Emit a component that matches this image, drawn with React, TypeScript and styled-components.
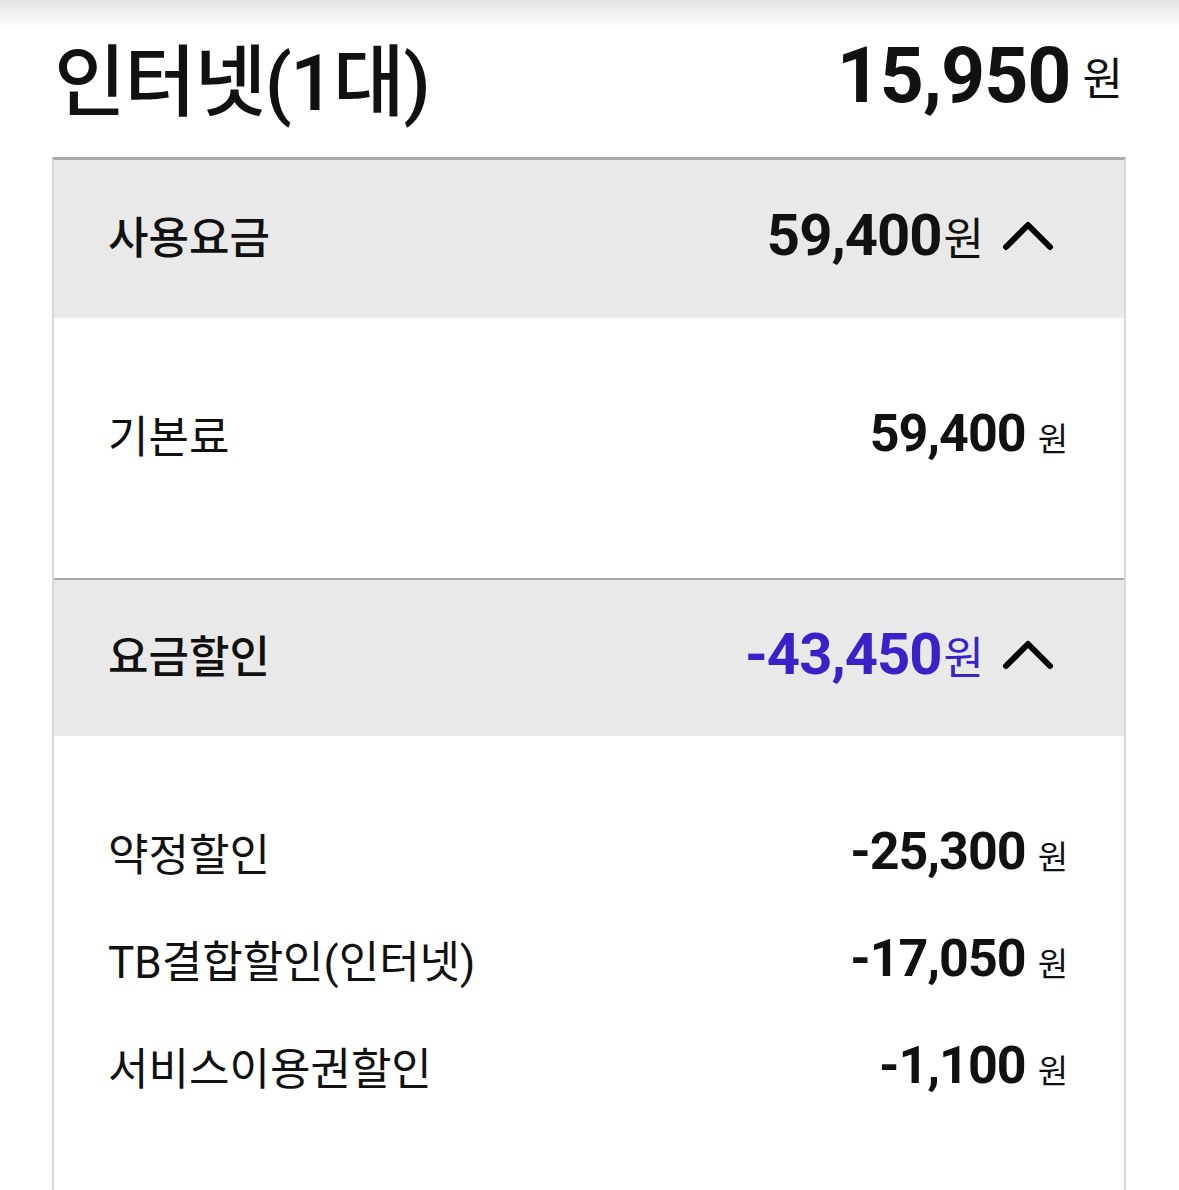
import React from "react";
import styled, { createGlobalStyle } from "styled-components";

const GlobalStyle = createGlobalStyle`
  body {
    margin: 0;
    background: #ffffff;
    font-family: Roboto, "Noto Sans CJK KR", sans-serif;
    color: #111111;
  }
`;

const Root = styled.div`
  width: 1179px;
  height: 1190px;
  overflow: hidden;
  background: #ffffff;
`;
const TopShadow = styled.div`
  height: 28px;
  background: linear-gradient(#e4e4e4, #ffffff);
`;
const TitleRow = styled.div`
  display: flex;
  justify-content: space-between;
  align-items: center;
  height: 129px;
  padding: 0 56px 34px 54px;
  box-sizing: border-box;
`;
const Title = styled.div`
  font-family: Roboto, "Noto Sans CJK KR", sans-serif;
  font-size: 78px;
  font-weight: 500;
  letter-spacing: -1.5px;
  color: #111111;
`;
const AmountWrap = styled.div<{ $gap: number; $center?: boolean }>`
  display: flex;
  align-items: ${(p) => (p.$center ? "center" : "baseline")};
  gap: ${(p) => p.$gap}px;
`;
const Value = styled.span<{ $size: number; $color?: string }>`
  font-family: Roboto, sans-serif;
  font-weight: 700;
  font-size: ${(p) => p.$size}px;
  letter-spacing: -1px;
  color: ${(p) => p.$color || "#111111"};
`;
const Unit = styled.span<{ $size: number; $color?: string }>`
  font-family: "Noto Sans CJK KR", sans-serif;
  font-weight: 400;
  font-size: ${(p) => p.$size}px;
  color: ${(p) => p.$color || "#111111"};
`;
const Card = styled.div`
  margin: 0 53px 0 52px;
  border-top: 3px solid #aaaaaa;
  border-left: 2px solid #d8d8d8;
  border-right: 2px solid #d8d8d8;
`;
const SectionHeader = styled.div<{ $divider?: boolean }>`
  display: flex;
  justify-content: space-between;
  align-items: center;
  height: 158px;
  padding: 0 70px 8px 54px;
  box-sizing: border-box;
  background: #e9e9e9;
  border-top: ${(p) => (p.$divider ? "2px solid #aaaaaa" : "none")};
`;
const HeaderLabel = styled.div`
  font-family: "Noto Sans CJK KR", sans-serif;
  font-size: 44px;
  font-weight: 500;
  color: #111111;
`;
const HeaderRight = styled.div`
  display: flex;
  align-items: center;
  gap: 18px;
`;
const Body = styled.div`
  padding: 64px 56px 89px 54px;
  background: #ffffff;
`;
const Row = styled.div`
  display: flex;
  justify-content: space-between;
  align-items: center;
  height: 107px;
  padding-bottom: 4px;
  box-sizing: border-box;
`;
const RowLabel = styled.div`
  font-family: Roboto, "Noto Sans CJK KR", sans-serif;
  font-size: 44px;
  font-weight: 400;
  color: #111111;
`;

const Chevron = () => (
  <svg width="52" height="32" viewBox="0 0 52 32">
    <path
      d="M4 28 L26 6 L48 28"
      fill="none"
      stroke="#000"
      strokeWidth="6"
      strokeLinecap="round"
      strokeLinejoin="round"
    />
  </svg>
);

type Item = { label: string; amount: string };

const sections: {
  title: string;
  total: string;
  color?: string;
  items: Item[];
}[] = [
  {
    title: "사용요금",
    total: "59,400",
    items: [{ label: "기본료", amount: "59,400" }],
  },
  {
    title: "요금할인",
    total: "-43,450",
    color: "#3a22c9",
    items: [
      { label: "약정할인", amount: "-25,300" },
      { label: "TB결합할인(인터넷)", amount: "-17,050" },
      { label: "서비스이용권할인", amount: "-1,100" },
    ],
  },
];

export default function App() {
  return (
    <Root>
      <GlobalStyle />
      <TopShadow />
      <TitleRow>
        <Title>인터넷(1대)</Title>
        <AmountWrap $gap={12} $center>
          <Value $size={77}>15,950</Value>
          <Unit $size={44}>원</Unit>
        </AmountWrap>
      </TitleRow>
      <Card>
        {sections.map((section, i) => (
          <React.Fragment key={section.title}>
            <SectionHeader $divider={i > 0}>
              <HeaderLabel>{section.title}</HeaderLabel>
              <HeaderRight>
                <AmountWrap $gap={2}>
                  <Value $size={58} $color={section.color}>
                    {section.total}
                  </Value>
                  <Unit $size={44} $color={section.color}>
                    원
                  </Unit>
                </AmountWrap>
                <Chevron />
              </HeaderRight>
            </SectionHeader>
            <Body>
              {section.items.map((item) => (
                <Row key={item.label}>
                  <RowLabel>{item.label}</RowLabel>
                  <AmountWrap $gap={12}>
                    <Value $size={52}>{item.amount}</Value>
                    <Unit $size={33}>원</Unit>
                  </AmountWrap>
                </Row>
              ))}
            </Body>
          </React.Fragment>
        ))}
      </Card>
    </Root>
  );
}
